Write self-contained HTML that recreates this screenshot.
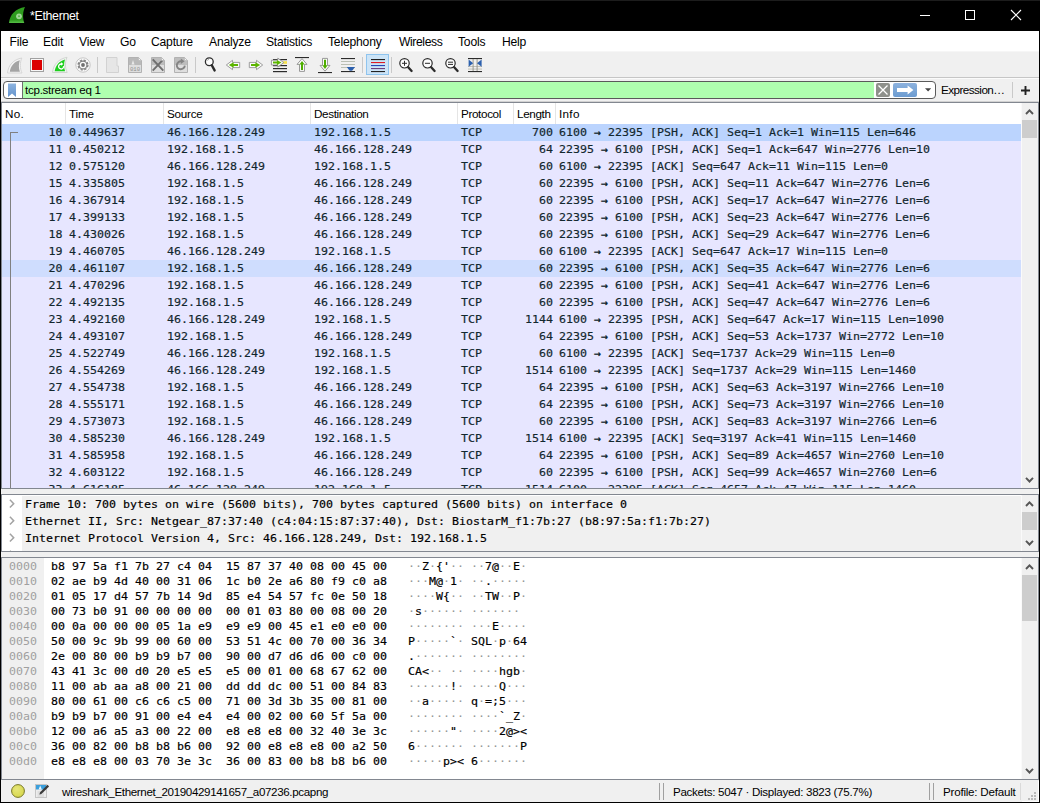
<!DOCTYPE html>
<html><head><meta charset="utf-8"><title>*Ethernet</title>
<style>
*{box-sizing:border-box;margin:0;padding:0}
html,body{width:1040px;height:803px;overflow:hidden;background:#000}
body{font-family:"Liberation Sans",sans-serif;font-size:12px;color:#000}
#win{position:relative;width:1040px;height:803px;background:#000;overflow:hidden}
#win i{position:absolute;display:block}
#win svg{position:absolute;display:block;overflow:visible}
#bg{position:absolute;left:1px;top:31px;width:1038px;height:771px;background:#f0f0f0}
#title{position:absolute;left:0;top:0;width:1040px;height:31px;background:#000;color:#fff}
#title span{position:absolute;left:30px;top:8px;font-size:12.4px;line-height:16px;white-space:nowrap;letter-spacing:-0.33px}
#menu{position:absolute;left:1px;top:31px;width:1038px;height:21px;background:#fff;border-bottom:1px solid #f6f6f6}
#menu span{position:absolute;top:3px;line-height:16px;font-size:12.15px;white-space:nowrap;letter-spacing:-0.2px}
#tb{position:absolute;left:1px;top:52px;width:1038px;height:27px;background:#f0f0f0;border-bottom:1px solid #fbfbfb}
#tb:after{content:"";position:absolute;left:0;right:0;top:25px;height:1px;background:#c6c6c6}
#fb{position:absolute;left:1px;top:79px;width:1038px;height:23px;background:#f0f0f0;border-bottom:1px solid #d2d2d2}
#fbox{position:absolute;left:2px;top:2px;width:933px;height:18px;border:1px solid #5a5a5a;border-radius:4px;background:#fff;overflow:hidden}
#fgreen{position:absolute;left:18px;top:0;width:852px;height:16px;background:#afffaf;border-left:1px solid #6e6e6e}
#ftext{position:absolute;left:21px;top:0;line-height:16px;font-size:11.6px;white-space:nowrap;letter-spacing:-0.28px}
.sans{font-family:"Liberation Sans",sans-serif}
#plist{position:absolute;left:1px;top:102px;width:1038px;height:387px;background:#fff;border:1px solid #828790;overflow:hidden}
#phead{position:absolute;left:0;top:0;width:1019px;height:21px;background:#fff}
.ht{position:absolute;top:3px;line-height:15px;font-size:11.7px;white-space:nowrap;letter-spacing:-0.36px}
#win i.hs{top:0;width:1px;height:21px;background:#e5e5e5}
.pr{position:absolute;left:0;width:1019px;height:17px;background:#e7e6ff;color:#12272e;font-family:"DejaVu Sans Mono","Liberation Mono",monospace;font-size:11.63px;line-height:17px;white-space:pre}
.pr.sel{background:#bbd4fe}
.pr.hov{background:#cfddfe}
.c{position:absolute;top:0;white-space:pre;transform:translateY(0.5px) scaleY(0.93)}
.c.r{text-align:right}
#tl1{left:8px;top:29px;width:8px;height:1px;background:#808080}
#tl2{left:8px;top:29px;width:1px;height:400px;background:#808080}
.sb{position:absolute;right:0;width:17px;background:#f0f0f0}
.sb .th{position:absolute;left:1px;width:15px;background:#cdcdcd}
#detail{position:absolute;left:1px;top:494px;width:1038px;height:58px;background:#fff;border:1px solid #828790;overflow:hidden}
.dr{position:absolute;left:0;width:1019px;background:linear-gradient(90deg,#fff 20px,#f0f0f0 20px);height:17px;font-family:"DejaVu Sans Mono","Liberation Mono",monospace;font-size:11.63px;line-height:17px;white-space:pre;color:#000}
.dr span{position:absolute;left:23px;top:0;transform:translateY(0.5px) scaleY(0.93)}
#hex{position:absolute;left:1px;top:557px;width:1038px;height:223px;background:#fff;border:1px solid #828790;overflow:hidden}
#hexoff{position:absolute;left:0;top:0;width:42px;height:221px;background:#f0f0f0}
.hr{position:absolute;left:0;width:1019px;height:15px;font-family:"DejaVu Sans Mono","Liberation Mono",monospace;font-size:11.63px;line-height:15px;white-space:pre;color:#000}
.hr span{position:absolute;top:0;white-space:pre;transform:translateY(0.5px) scaleY(0.93)}
.ho{left:7px;color:#a0a0a0}
.hb{left:49px}
.ha{left:406px}
.ha b{font-weight:normal;color:#969696;-webkit-text-stroke:0}
#status{position:absolute;left:1px;top:780px;width:1038px;height:22px;background:#f0f0f0}
#status span{position:absolute;top:4px;line-height:15px;font-size:11.6px;white-space:nowrap;letter-spacing:-0.3px}
svg.au path{fill:none;stroke:#565656;stroke-width:1.9}
svg.ex path{fill:none;stroke:#a3a3a3;stroke-width:1.5}
.sb:before{content:"";position:absolute;left:0;top:0;bottom:0;width:1px;background:#fafafa}
.c b{font-weight:bold}
.c,.dr span,.hb,.ha{-webkit-text-stroke:0.18px currentColor}

</style></head><body>
<div id="win">
<div id="bg"></div>
<div id="title"><svg style="left:0;top:0" width="32" height="31" viewBox="0 0 32 31"><defs><linearGradient id="gfin" x1="0" y1="0" x2="0" y2="1"><stop offset="0" stop-color="#2f9e1f"/><stop offset=".8" stop-color="#2c981c"/><stop offset="1" stop-color="#58c048"/></linearGradient></defs><path d="M9 23 C9.8 14.5 15.5 8.6 25 7 C22.8 11.5 22.4 17.5 24.3 23 Z" fill="url(#gfin)"/><circle cx="19" cy="16.3" r="2.9" fill="#b4e0aa" fill-opacity=".85"/><circle cx="19" cy="16.3" r="1" fill="#58b548"/></svg><span>*Ethernet</span>
<svg style="left:920px;top:15px" width="10" height="1"><rect width="10" height="1" fill="#fff"/></svg>
<svg style="left:965px;top:10px" width="10" height="10"><rect x="0.5" y="0.5" width="9" height="9" fill="none" stroke="#fff"/></svg>
<svg style="left:1011px;top:10px" width="10" height="10"><path d="M0 0L10 10M10 0L0 10" stroke="#fff" stroke-width="1.1"/></svg>
<i style="left:0;top:0;width:1040px;height:1px;background:#1c1c1c"></i></div>
<div id="menu"><span style="left:8.5px">File</span><span style="left:42px">Edit</span><span style="left:78px">View</span><span style="left:119px">Go</span><span style="left:150px">Capture</span><span style="left:208px">Analyze</span><span style="left:265px;letter-spacing:-0.25px">Statistics</span><span style="left:327px">Telephony</span><span style="left:398px;letter-spacing:-0.4px">Wireless</span><span style="left:457px">Tools</span><span style="left:501px">Help</span></div>
<div id="tb"><svg style="left:0;top:0" width="1038" height="27" viewBox="1 52 1038 27">
<!-- start capture (disabled fin) -->
<path d="M7.5 73 C8.3 65 13.5 59.5 21.8 58 C19.8 62.5 19.8 68.5 22 73 Z" fill="#f4f4f4" stroke="#d6d6d6" stroke-width="1"/>
<path d="M9.8 71.7 C10.6 66 14.3 61.6 19.8 60.2 C18.5 64 18.6 68.2 19.9 71.7 Z" fill="#a4a4a4"/>
<!-- stop -->
<rect x="30.5" y="58.5" width="13" height="13" fill="#f7f7f7" stroke="#a0a0a0"/>
<rect x="32" y="60" width="10" height="10" fill="#dc0000"/>
<!-- restart -->
<path d="M52.5 72.5 C53.3 64.5 58.5 59 67 57.3 C64.9 62 64.9 68 67.2 72.5 Z" fill="#f4f4f4" stroke="#d0d6d0" stroke-width="1"/>
<path d="M54.7 71.3 C55.5 65.5 59.3 61 65 59.5 C63.7 63.4 63.8 67.8 65.1 71.3 Z" fill="#1fcf1f"/>
<path d="M63.6 66.2 A2.5 2.5 0 1 1 61.2 64" fill="none" stroke="#fff" stroke-width="1.3"/>
<path d="M61 62.2 L63.4 64 L61 65.8 Z" fill="#fff"/>
<!-- options gear -->
<circle cx="83" cy="65" r="7.2" fill="#fbfbfb" stroke="#c6c6c6"/>
<circle cx="83" cy="65" r="4.9" fill="none" stroke="#858585" stroke-width="1.4" stroke-dasharray="2.3 1.55"/>
<circle cx="83" cy="65" r="3.9" fill="none" stroke="#808080" stroke-width="1.1"/>
<circle cx="83" cy="65" r="1.9" fill="#707070"/>
<rect x="97" y="57" width="1" height="16" fill="#c9c9c9"/>
<!-- open -->
<path d="M106.5 57.5 H117 V66 H118.5 V72.5 H106.5 Z" fill="#e6e6e6" stroke="#d2d2d2"/>
<!-- save 010 -->
<path d="M128.5 57.5 H138.5 L141.5 60.5 V72.5 H128.5 Z" fill="#dedede" stroke="#b2b2b2"/>
<path d="M129 58 H138.3 L141 60.7 V65 H129 Z" fill="#b9b9b9"/>
<path d="M138.5 57.5 V60.5 H141.5 Z" fill="#f4f4f4" stroke="#b2b2b2" stroke-width=".6"/>
<path d="M131.5 64.5 L133 60 L134.5 64.5Z" fill="#e8e8e8"/>
<text x="130" y="70.6" font-family="Liberation Mono,monospace" font-size="5.6" fill="#8e8e8e" textLength="10">010</text>
<!-- close -->
<path d="M151.5 57.5 H161.5 L164.5 60.5 V72.5 H151.5 Z" fill="#dedede" stroke="#b2b2b2"/>
<path d="M152 58 H161.3 L164 60.7 V65 H152 Z" fill="#bdbdbd"/>
<path d="M152.7 59.3 L163.3 70.7 M163.3 59.3 L152.7 70.7" stroke="#6e6e6e" stroke-width="1.9" fill="none"/>
<path d="M161.5 57.5 V60.5 H164.5 Z" fill="#f4f4f4" stroke="#b2b2b2" stroke-width=".6"/>
<!-- reload -->
<path d="M174.5 57.5 H184.5 L187.5 60.5 V72.5 H174.5 Z" fill="#dedede" stroke="#b2b2b2"/>
<path d="M175 58 H184.3 L187 60.7 V65 H175 Z" fill="#bdbdbd"/>
<path d="M184.8 65.6 A4 4 0 1 1 181.3 61.3" fill="none" stroke="#848484" stroke-width="1.9"/>
<path d="M180.8 58.6 L184.6 61.2 L180.8 64 Z" fill="#848484"/>
<path d="M184.5 57.5 V60.5 H187.5 Z" fill="#f4f4f4" stroke="#b2b2b2" stroke-width=".6"/>
<rect x="195" y="57" width="1" height="16" fill="#c9c9c9"/>
<!-- find -->
<circle cx="209.3" cy="61.8" r="3.9" fill="#fdfdfd" stroke="#2d2d2d" stroke-width="1.3"/>
<path d="M207 60.8 A2.4 2.4 0 0 1 209 59.4" fill="none" stroke="#9a9a9a" stroke-width=".8"/>
<path d="M211.8 65.2 L214.6 70.4" stroke="#2a2a2a" stroke-width="2.4" stroke-linecap="round"/>
<!-- back -->
<path d="M226.3 65 L232.5 60.3 V62.4 H239.7 V67.6 H232.5 V69.7 Z" fill="#fafafa" stroke="#939393" stroke-width=".9"/>
<path d="M228.8 65 L233.6 62.2 V63.9 H238 V66.1 H233.6 V67.8 Z" fill="#5cb500"/>
<!-- forward -->
<path d="M262.7 65 L256.5 60.3 V62.4 H249.3 V67.6 H256.5 V69.7 Z" fill="#fafafa" stroke="#939393" stroke-width=".9"/>
<path d="M260.2 65 L255.4 62.2 V63.9 H251 V66.1 H255.4 V67.8 Z" fill="#5cb500"/>
<!-- goto -->
<rect x="273" y="59" width="14" height="1.2" fill="#2b2b2b"/>
<rect x="273" y="65" width="14" height="1.2" fill="#2b2b2b"/>
<rect x="273" y="68" width="14" height="1.2" fill="#2b2b2b"/>
<rect x="273" y="71" width="14" height="1.2" fill="#2b2b2b"/>
<rect x="283" y="61.2" width="4" height="2.6" fill="#f5e04a"/>
<path d="M283.7 62.6 L277.8 58.1 V60.2 H271.4 V65 H277.8 V67.1 Z" fill="#fafafa" stroke="#8f8f8f" stroke-width=".9"/>
<path d="M281.4 62.6 L276.9 59.9 V61.6 H273 V63.6 H276.9 V65.3 Z" fill="#5cb500"/>
<!-- first -->
<rect x="295" y="57" width="14" height="1.1" fill="#2b2b2b"/>
<path d="M302 58.6 L297 64.4 H299.5 V71.4 H304.5 V64.4 H307 Z" fill="#fafafa" stroke="#8f8f8f" stroke-width=".9"/>
<path d="M302 60.9 L299.4 64.6 H301 V70 H303 V64.6 H304.6 Z" fill="#4fae00"/>
<!-- last -->
<rect x="318" y="72" width="14" height="1.1" fill="#2b2b2b"/>
<path d="M325 71.2 L320 65.4 H322.5 V58.4 H327.5 V65.4 H330 Z" fill="#fafafa" stroke="#8f8f8f" stroke-width=".9"/>
<path d="M325 68.9 L322.4 65.2 H324 V59.8 H326 V65.2 H327.6 Z" fill="#4fae00"/>
<!-- autoscroll -->
<rect x="341" y="58" width="14" height="1.1" fill="#2b2b2b"/>
<rect x="341" y="61.1" width="14" height=".9" fill="#b4b9ad"/>
<rect x="341" y="64.1" width="14" height=".9" fill="#b4b9ad"/>
<rect x="341" y="67.1" width="14" height=".9" fill="#b4b9ad"/>
<rect x="341" y="71" width="14" height="1.1" fill="#2b2b2b"/>
<path d="M346.8 67 H355 L352.6 70.2 Q350.9 71.4 349.2 70.2 Z" fill="#2c60ad"/>
<rect x="362" y="57" width="1" height="16" fill="#c9c9c9"/>
<!-- colorize (checked) -->
<rect x="366.5" y="54.5" width="22" height="20" fill="#cce4f7" stroke="#8fc4ee"/>
<rect x="371" y="59" width="14" height="1.1" fill="#222"/>
<rect x="371" y="62" width="14" height="1.1" fill="#e01b24"/>
<rect x="371" y="65" width="14" height="1.1" fill="#2546b8"/>
<rect x="371" y="68" width="14" height="1.1" fill="#6b3f7f"/>
<rect x="371" y="71" width="14" height="1.1" fill="#222"/>
<rect x="391" y="57" width="1" height="16" fill="#c9c9c9"/>
<!-- zoom in -->
<g fill="none" stroke="#2b2b2b">
<circle cx="404.5" cy="63.3" r="4.7" fill="#fdfdfd" stroke-width="1.2"/>
<path d="M408.2 67.2 L411.6 71" stroke-width="2.3" stroke-linecap="round"/>
<path d="M402 63.3 H407 M404.5 60.8 V65.8" stroke-width="1"/>
<circle cx="427.5" cy="63.3" r="4.7" fill="#fdfdfd" stroke-width="1.2"/>
<path d="M431.2 67.2 L434.6 71" stroke-width="2.3" stroke-linecap="round"/>
<path d="M425 63.3 H430" stroke-width="1"/>
<circle cx="450.5" cy="63.3" r="4.7" fill="#fdfdfd" stroke-width="1.2"/>
<path d="M454.2 67.2 L457.6 71" stroke-width="2.3" stroke-linecap="round"/>
<path d="M448 62.2 H453 M448 64.4 H453" stroke-width="1"/>
</g>
<!-- resize columns -->
<rect x="468" y="58" width="14" height="1.1" fill="#2b2b2b"/>
<rect x="468" y="71" width="14" height="1.1" fill="#2b2b2b"/>
<rect x="468" y="66.1" width="14" height=".9" fill="#b9b9b0"/>
<rect x="468" y="68.6" width="14" height=".9" fill="#b9b9b0"/>
<rect x="472.6" y="59" width="1" height="12" fill="#9a9a90"/>
<rect x="476.6" y="59" width="1" height="12" fill="#9a9a90"/>
<path d="M468.6 59.6 L473.2 63.2 L468.6 66.8 Z" fill="#2c60ad"/>
<path d="M481.6 59.6 L477 63.2 L481.6 66.8 Z" fill="#2c60ad"/>
</svg>
</div>
<div id="fb"><div id="fbox"><div id="fgreen"></div><span id="ftext">tcp.stream eq 1</span>
<svg style="left:-4px;top:-82px" width="940" height="20" viewBox="0 0 940 20">
<defs><linearGradient id="gbm" x1="0" y1="0" x2="0" y2="1"><stop offset="0" stop-color="#8db4e0"/><stop offset="1" stop-color="#6593cb"/></linearGradient>
<linearGradient id="gap" x1="0" y1="0" x2="0" y2="1"><stop offset="0" stop-color="#8db2de"/><stop offset="1" stop-color="#6c9cd1"/></linearGradient></defs>
</svg>
<svg style="left:0;top:0" width="931" height="16" viewBox="4 82 931 16">
<path d="M8 83.5 H16 V97 L12 93.6 L8 97 Z" fill="url(#gbm)"/>
<rect x="876" y="83" width="14" height="14" rx="2" fill="#8e908b"/>
<path d="M878.5 85.5 L887.5 94.5 M887.5 85.5 L878.5 94.5" stroke="#fff" stroke-width="1.3"/>
<rect x="893" y="83" width="24" height="14" rx="2" fill="url(#gap)"/>
<path d="M897 88 H907.6 V85.6 L913.4 90 L907.6 94.4 V92 H897 Z" fill="#fff"/>
<path d="M925 88.3 H931.2 L928.1 91.6 Z" fill="#444"/>
</svg></div>
<span class="ht" style="left:940px;top:3px;letter-spacing:-0.55px">Expression…</span>
<i style="left:1011px;top:3px;width:1px;height:16px;background:#c9c9c9"></i>
<svg style="left:1020px;top:7px" width="9" height="9" viewBox="0 0 9 9"><path d="M0 4.5H9M4.5 0V9" stroke="#222" stroke-width="1.9"/></svg>
</div>

<div id="plist">
<div id="phead">
<span class="ht" style="left:3px;letter-spacing:0.25px">No.</span>
<span class="ht" style="left:67px;letter-spacing:-0.2px">Time</span>
<span class="ht" style="left:165px;letter-spacing:-0.25px">Source</span>
<span class="ht" style="left:312px">Destination</span>
<span class="ht" style="left:459px">Protocol</span>
<span class="ht" style="left:515px">Length</span>
<span class="ht" style="left:557px;letter-spacing:0.3px">Info</span>
<i class="hs" style="left:63px"></i>
<i class="hs" style="left:161px"></i>
<i class="hs" style="left:308px"></i>
<i class="hs" style="left:455px"></i>
<i class="hs" style="left:511px"></i>
<i class="hs" style="left:553px"></i>
</div>
<div class="pr sel" style="top:21px"><span class="c r" style="left:0;width:60.6px">10</span><span class="c" style="left:67px">0.449637</span><span class="c" style="left:165px">46.166.128.249</span><span class="c" style="left:312px">192.168.1.5</span><span class="c" style="left:459px">TCP</span><span class="c r" style="left:511px;width:40px">700</span><span class="c" style="left:557px">6100 <b>→</b> 22395 [PSH, ACK] Seq=1 Ack=1 Win=115 Len=646</span></div>
<div class="pr" style="top:38px"><span class="c r" style="left:0;width:60.6px">11</span><span class="c" style="left:67px">0.450212</span><span class="c" style="left:165px">192.168.1.5</span><span class="c" style="left:312px">46.166.128.249</span><span class="c" style="left:459px">TCP</span><span class="c r" style="left:511px;width:40px">64</span><span class="c" style="left:557px">22395 <b>→</b> 6100 [PSH, ACK] Seq=1 Ack=647 Win=2776 Len=10</span></div>
<div class="pr" style="top:55px"><span class="c r" style="left:0;width:60.6px">12</span><span class="c" style="left:67px">0.575120</span><span class="c" style="left:165px">46.166.128.249</span><span class="c" style="left:312px">192.168.1.5</span><span class="c" style="left:459px">TCP</span><span class="c r" style="left:511px;width:40px">60</span><span class="c" style="left:557px">6100 <b>→</b> 22395 [ACK] Seq=647 Ack=11 Win=115 Len=0</span></div>
<div class="pr" style="top:72px"><span class="c r" style="left:0;width:60.6px">15</span><span class="c" style="left:67px">4.335805</span><span class="c" style="left:165px">192.168.1.5</span><span class="c" style="left:312px">46.166.128.249</span><span class="c" style="left:459px">TCP</span><span class="c r" style="left:511px;width:40px">60</span><span class="c" style="left:557px">22395 <b>→</b> 6100 [PSH, ACK] Seq=11 Ack=647 Win=2776 Len=6</span></div>
<div class="pr" style="top:89px"><span class="c r" style="left:0;width:60.6px">16</span><span class="c" style="left:67px">4.367914</span><span class="c" style="left:165px">192.168.1.5</span><span class="c" style="left:312px">46.166.128.249</span><span class="c" style="left:459px">TCP</span><span class="c r" style="left:511px;width:40px">60</span><span class="c" style="left:557px">22395 <b>→</b> 6100 [PSH, ACK] Seq=17 Ack=647 Win=2776 Len=6</span></div>
<div class="pr" style="top:106px"><span class="c r" style="left:0;width:60.6px">17</span><span class="c" style="left:67px">4.399133</span><span class="c" style="left:165px">192.168.1.5</span><span class="c" style="left:312px">46.166.128.249</span><span class="c" style="left:459px">TCP</span><span class="c r" style="left:511px;width:40px">60</span><span class="c" style="left:557px">22395 <b>→</b> 6100 [PSH, ACK] Seq=23 Ack=647 Win=2776 Len=6</span></div>
<div class="pr" style="top:123px"><span class="c r" style="left:0;width:60.6px">18</span><span class="c" style="left:67px">4.430026</span><span class="c" style="left:165px">192.168.1.5</span><span class="c" style="left:312px">46.166.128.249</span><span class="c" style="left:459px">TCP</span><span class="c r" style="left:511px;width:40px">60</span><span class="c" style="left:557px">22395 <b>→</b> 6100 [PSH, ACK] Seq=29 Ack=647 Win=2776 Len=6</span></div>
<div class="pr" style="top:140px"><span class="c r" style="left:0;width:60.6px">19</span><span class="c" style="left:67px">4.460705</span><span class="c" style="left:165px">46.166.128.249</span><span class="c" style="left:312px">192.168.1.5</span><span class="c" style="left:459px">TCP</span><span class="c r" style="left:511px;width:40px">60</span><span class="c" style="left:557px">6100 <b>→</b> 22395 [ACK] Seq=647 Ack=17 Win=115 Len=0</span></div>
<div class="pr hov" style="top:157px"><span class="c r" style="left:0;width:60.6px">20</span><span class="c" style="left:67px">4.461107</span><span class="c" style="left:165px">192.168.1.5</span><span class="c" style="left:312px">46.166.128.249</span><span class="c" style="left:459px">TCP</span><span class="c r" style="left:511px;width:40px">60</span><span class="c" style="left:557px">22395 <b>→</b> 6100 [PSH, ACK] Seq=35 Ack=647 Win=2776 Len=6</span></div>
<div class="pr" style="top:174px"><span class="c r" style="left:0;width:60.6px">21</span><span class="c" style="left:67px">4.470296</span><span class="c" style="left:165px">192.168.1.5</span><span class="c" style="left:312px">46.166.128.249</span><span class="c" style="left:459px">TCP</span><span class="c r" style="left:511px;width:40px">60</span><span class="c" style="left:557px">22395 <b>→</b> 6100 [PSH, ACK] Seq=41 Ack=647 Win=2776 Len=6</span></div>
<div class="pr" style="top:191px"><span class="c r" style="left:0;width:60.6px">22</span><span class="c" style="left:67px">4.492135</span><span class="c" style="left:165px">192.168.1.5</span><span class="c" style="left:312px">46.166.128.249</span><span class="c" style="left:459px">TCP</span><span class="c r" style="left:511px;width:40px">60</span><span class="c" style="left:557px">22395 <b>→</b> 6100 [PSH, ACK] Seq=47 Ack=647 Win=2776 Len=6</span></div>
<div class="pr" style="top:208px"><span class="c r" style="left:0;width:60.6px">23</span><span class="c" style="left:67px">4.492160</span><span class="c" style="left:165px">46.166.128.249</span><span class="c" style="left:312px">192.168.1.5</span><span class="c" style="left:459px">TCP</span><span class="c r" style="left:511px;width:40px">1144</span><span class="c" style="left:557px">6100 <b>→</b> 22395 [PSH, ACK] Seq=647 Ack=17 Win=115 Len=1090</span></div>
<div class="pr" style="top:225px"><span class="c r" style="left:0;width:60.6px">24</span><span class="c" style="left:67px">4.493107</span><span class="c" style="left:165px">192.168.1.5</span><span class="c" style="left:312px">46.166.128.249</span><span class="c" style="left:459px">TCP</span><span class="c r" style="left:511px;width:40px">64</span><span class="c" style="left:557px">22395 <b>→</b> 6100 [PSH, ACK] Seq=53 Ack=1737 Win=2772 Len=10</span></div>
<div class="pr" style="top:242px"><span class="c r" style="left:0;width:60.6px">25</span><span class="c" style="left:67px">4.522749</span><span class="c" style="left:165px">46.166.128.249</span><span class="c" style="left:312px">192.168.1.5</span><span class="c" style="left:459px">TCP</span><span class="c r" style="left:511px;width:40px">60</span><span class="c" style="left:557px">6100 <b>→</b> 22395 [ACK] Seq=1737 Ack=29 Win=115 Len=0</span></div>
<div class="pr" style="top:259px"><span class="c r" style="left:0;width:60.6px">26</span><span class="c" style="left:67px">4.554269</span><span class="c" style="left:165px">46.166.128.249</span><span class="c" style="left:312px">192.168.1.5</span><span class="c" style="left:459px">TCP</span><span class="c r" style="left:511px;width:40px">1514</span><span class="c" style="left:557px">6100 <b>→</b> 22395 [ACK] Seq=1737 Ack=29 Win=115 Len=1460</span></div>
<div class="pr" style="top:276px"><span class="c r" style="left:0;width:60.6px">27</span><span class="c" style="left:67px">4.554738</span><span class="c" style="left:165px">192.168.1.5</span><span class="c" style="left:312px">46.166.128.249</span><span class="c" style="left:459px">TCP</span><span class="c r" style="left:511px;width:40px">64</span><span class="c" style="left:557px">22395 <b>→</b> 6100 [PSH, ACK] Seq=63 Ack=3197 Win=2766 Len=10</span></div>
<div class="pr" style="top:293px"><span class="c r" style="left:0;width:60.6px">28</span><span class="c" style="left:67px">4.555171</span><span class="c" style="left:165px">192.168.1.5</span><span class="c" style="left:312px">46.166.128.249</span><span class="c" style="left:459px">TCP</span><span class="c r" style="left:511px;width:40px">64</span><span class="c" style="left:557px">22395 <b>→</b> 6100 [PSH, ACK] Seq=73 Ack=3197 Win=2766 Len=10</span></div>
<div class="pr" style="top:310px"><span class="c r" style="left:0;width:60.6px">29</span><span class="c" style="left:67px">4.573073</span><span class="c" style="left:165px">192.168.1.5</span><span class="c" style="left:312px">46.166.128.249</span><span class="c" style="left:459px">TCP</span><span class="c r" style="left:511px;width:40px">60</span><span class="c" style="left:557px">22395 <b>→</b> 6100 [PSH, ACK] Seq=83 Ack=3197 Win=2766 Len=6</span></div>
<div class="pr" style="top:327px"><span class="c r" style="left:0;width:60.6px">30</span><span class="c" style="left:67px">4.585230</span><span class="c" style="left:165px">46.166.128.249</span><span class="c" style="left:312px">192.168.1.5</span><span class="c" style="left:459px">TCP</span><span class="c r" style="left:511px;width:40px">1514</span><span class="c" style="left:557px">6100 <b>→</b> 22395 [ACK] Seq=3197 Ack=41 Win=115 Len=1460</span></div>
<div class="pr" style="top:344px"><span class="c r" style="left:0;width:60.6px">31</span><span class="c" style="left:67px">4.585958</span><span class="c" style="left:165px">192.168.1.5</span><span class="c" style="left:312px">46.166.128.249</span><span class="c" style="left:459px">TCP</span><span class="c r" style="left:511px;width:40px">64</span><span class="c" style="left:557px">22395 <b>→</b> 6100 [PSH, ACK] Seq=89 Ack=4657 Win=2760 Len=10</span></div>
<div class="pr" style="top:361px"><span class="c r" style="left:0;width:60.6px">32</span><span class="c" style="left:67px">4.603122</span><span class="c" style="left:165px">192.168.1.5</span><span class="c" style="left:312px">46.166.128.249</span><span class="c" style="left:459px">TCP</span><span class="c r" style="left:511px;width:40px">60</span><span class="c" style="left:557px">22395 <b>→</b> 6100 [PSH, ACK] Seq=99 Ack=4657 Win=2760 Len=6</span></div>
<div class="pr" style="top:378px"><span class="c r" style="left:0;width:60.6px">33</span><span class="c" style="left:67px">4.616185</span><span class="c" style="left:165px">46.166.128.249</span><span class="c" style="left:312px">192.168.1.5</span><span class="c" style="left:459px">TCP</span><span class="c r" style="left:511px;width:40px">1514</span><span class="c" style="left:557px">6100 <b>→</b> 22395 [ACK] Seq=4657 Ack=47 Win=115 Len=1460</span></div>
<i id="tl1"></i><i id="tl2"></i>
<div class="sb" style="top:0;height:385px"><div class="th" style="top:17px;height:18px"></div><svg class="au" style="left:0;top:0" width="17" height="17"><path d="M5 11 L8.5 7.3 L12 11" /></svg><svg class="au" style="left:0;top:368px" width="17" height="17"><path d="M5 6.8 L8.5 10.5 L12 6.8" /></svg></div>

</div>
<div id="detail">
<div class="dr" style="top:1px"><svg class="ex" style="left:7px;top:3px" width="6" height="10"><path d="M0.9 0.8 L4.7 4.7 L0.9 8.6"/></svg><span>Frame 10: 700 bytes on wire (5600 bits), 700 bytes captured (5600 bits) on interface 0</span></div>
<div class="dr" style="top:18px"><svg class="ex" style="left:7px;top:3px" width="6" height="10"><path d="M0.9 0.8 L4.7 4.7 L0.9 8.6"/></svg><span>Ethernet II, Src: Netgear_87:37:40 (c4:04:15:87:37:40), Dst: BiostarM_f1:7b:27 (b8:97:5a:f1:7b:27)</span></div>
<div class="dr" style="top:35px"><svg class="ex" style="left:7px;top:3px" width="6" height="10"><path d="M0.9 0.8 L4.7 4.7 L0.9 8.6"/></svg><span>Internet Protocol Version 4, Src: 46.166.128.249, Dst: 192.168.1.5</span></div>
<div class="dr" style="top:52px"><svg class="ex" style="left:7px;top:3px" width="6" height="10"><path d="M0.9 0.8 L4.7 4.7 L0.9 8.6"/></svg><span>Transmission Control Protocol, Src Port: 6100, Dst Port: 22395, Seq: 1, Ack: 1, Len: 646</span></div>
<div class="sb" style="top:0;height:56px"><div class="th" style="top:17px;height:18px"></div><svg class="au" style="left:0;top:0" width="17" height="17"><path d="M5 11 L8.5 7.3 L12 11" /></svg><svg class="au" style="left:0;top:39px" width="17" height="17"><path d="M5 6.8 L8.5 10.5 L12 6.8" /></svg></div>
</div>

<div id="hex"><div id="hexoff"></div>
<div class="hr" style="top:1px"><span class="ho">0000</span><span class="hb">b8 97 5a f1 7b 27 c4 04  15 87 37 40 08 00 45 00</span><span class="ha"><b>·</b><b>·</b>Z<b>·</b>{'<b>·</b><b>·</b> <b>·</b><b>·</b>7@<b>·</b><b>·</b>E<b>·</b></span></div>
<div class="hr" style="top:16px"><span class="ho">0010</span><span class="hb">02 ae b9 4d 40 00 31 06  1c b0 2e a6 80 f9 c0 a8</span><span class="ha"><b>·</b><b>·</b><b>·</b>M@<b>·</b>1<b>·</b> <b>·</b><b>·</b>.<b>·</b><b>·</b><b>·</b><b>·</b><b>·</b></span></div>
<div class="hr" style="top:31px"><span class="ho">0020</span><span class="hb">01 05 17 d4 57 7b 14 9d  85 e4 54 57 fc 0e 50 18</span><span class="ha"><b>·</b><b>·</b><b>·</b><b>·</b>W{<b>·</b><b>·</b> <b>·</b><b>·</b>TW<b>·</b><b>·</b>P<b>·</b></span></div>
<div class="hr" style="top:46px"><span class="ho">0030</span><span class="hb">00 73 b0 91 00 00 00 00  00 01 03 80 00 08 00 20</span><span class="ha"><b>·</b>s<b>·</b><b>·</b><b>·</b><b>·</b><b>·</b><b>·</b> <b>·</b><b>·</b><b>·</b><b>·</b><b>·</b><b>·</b><b>·</b> </span></div>
<div class="hr" style="top:61px"><span class="ho">0040</span><span class="hb">00 0a 00 00 00 05 1a e9  e9 e9 00 45 e1 e0 e0 00</span><span class="ha"><b>·</b><b>·</b><b>·</b><b>·</b><b>·</b><b>·</b><b>·</b><b>·</b> <b>·</b><b>·</b><b>·</b>E<b>·</b><b>·</b><b>·</b><b>·</b></span></div>
<div class="hr" style="top:76px"><span class="ho">0050</span><span class="hb">50 00 9c 9b 99 00 60 00  53 51 4c 00 70 00 36 34</span><span class="ha">P<b>·</b><b>·</b><b>·</b><b>·</b><b>·</b>`<b>·</b> SQL<b>·</b>p<b>·</b>64</span></div>
<div class="hr" style="top:91px"><span class="ho">0060</span><span class="hb">2e 00 80 00 b9 b9 b7 00  90 00 d7 d6 d6 00 c0 00</span><span class="ha">.<b>·</b><b>·</b><b>·</b><b>·</b><b>·</b><b>·</b><b>·</b> <b>·</b><b>·</b><b>·</b><b>·</b><b>·</b><b>·</b><b>·</b><b>·</b></span></div>
<div class="hr" style="top:106px"><span class="ho">0070</span><span class="hb">43 41 3c 00 d0 20 e5 e5  e5 00 01 00 68 67 62 00</span><span class="ha">CA&lt;<b>·</b><b>·</b> <b>·</b><b>·</b> <b>·</b><b>·</b><b>·</b><b>·</b>hgb<b>·</b></span></div>
<div class="hr" style="top:121px"><span class="ho">0080</span><span class="hb">11 00 ab aa a8 00 21 00  dd dd dc 00 51 00 84 83</span><span class="ha"><b>·</b><b>·</b><b>·</b><b>·</b><b>·</b><b>·</b>!<b>·</b> <b>·</b><b>·</b><b>·</b><b>·</b>Q<b>·</b><b>·</b><b>·</b></span></div>
<div class="hr" style="top:136px"><span class="ho">0090</span><span class="hb">80 00 61 00 c6 c6 c5 00  71 00 3d 3b 35 00 81 00</span><span class="ha"><b>·</b><b>·</b>a<b>·</b><b>·</b><b>·</b><b>·</b><b>·</b> q<b>·</b>=;5<b>·</b><b>·</b><b>·</b></span></div>
<div class="hr" style="top:151px"><span class="ho">00a0</span><span class="hb">b9 b9 b7 00 91 00 e4 e4  e4 00 02 00 60 5f 5a 00</span><span class="ha"><b>·</b><b>·</b><b>·</b><b>·</b><b>·</b><b>·</b><b>·</b><b>·</b> <b>·</b><b>·</b><b>·</b><b>·</b>`_Z<b>·</b></span></div>
<div class="hr" style="top:166px"><span class="ho">00b0</span><span class="hb">12 00 a6 a5 a3 00 22 00  e8 e8 e8 00 32 40 3e 3c</span><span class="ha"><b>·</b><b>·</b><b>·</b><b>·</b><b>·</b><b>·</b>"<b>·</b> <b>·</b><b>·</b><b>·</b><b>·</b>2@&gt;&lt;</span></div>
<div class="hr" style="top:181px"><span class="ho">00c0</span><span class="hb">36 00 82 00 b8 b8 b6 00  92 00 e8 e8 e8 00 a2 50</span><span class="ha">6<b>·</b><b>·</b><b>·</b><b>·</b><b>·</b><b>·</b><b>·</b> <b>·</b><b>·</b><b>·</b><b>·</b><b>·</b><b>·</b><b>·</b>P</span></div>
<div class="hr" style="top:196px"><span class="ho">00d0</span><span class="hb">e8 e8 e8 00 03 70 3e 3c  36 00 83 00 b8 b8 b6 00</span><span class="ha"><b>·</b><b>·</b><b>·</b><b>·</b><b>·</b>p&gt;&lt; 6<b>·</b><b>·</b><b>·</b><b>·</b><b>·</b><b>·</b><b>·</b></span></div>
<div class="sb" style="top:0;height:221px"><div class="th" style="top:17px;height:46px"></div><svg class="au" style="left:0;top:0" width="17" height="17"><path d="M5 11 L8.5 7.3 L12 11" /></svg><svg class="au" style="left:0;top:204px" width="17" height="17"><path d="M5 6.8 L8.5 10.5 L12 6.8" /></svg></div>

</div>
<div id="status">
<svg style="left:10px;top:4px" width="14" height="14" viewBox="0 0 14 14"><defs><radialGradient id="gy" cx="0.4" cy="0.35" r="0.7"><stop offset="0" stop-color="#e6e67a"/><stop offset="1" stop-color="#d6d64a"/></radialGradient></defs><circle cx="7" cy="7" r="6.4" fill="url(#gy)" stroke="#77772a" stroke-width="1"/></svg>
<svg style="left:32.5px;top:3px" width="16" height="16" viewBox="33 783 16 16"><rect x="34.5" y="784.5" width="11" height="13" fill="#ececec" stroke="#c4c4c4"/><rect x="35" y="785" width="10" height="4.5" fill="#3a9fdc"/><path d="M37.6 789.5 L39.2 785.6 L40.8 789.5Z" fill="#eef6fc"/><path d="M36.5 792H43M36.5 794H43M36.5 796H43" stroke="#c9c9c9" stroke-width=".8"/><path d="M47.3 785.6 L39.6 793.2" stroke="#3a3a3a" stroke-width="2.2"/><path d="M38.4 794.5 L39 792.6 L40.3 793.9Z" fill="#222"/></svg>
<span style="left:61px;letter-spacing:-0.36px">wireshark_Ethernet_20190429141657_a07236.pcapng</span>
<i style="left:658px;top:3px;width:1px;height:17px;background:#a0a0a0"></i><i style="left:662px;top:3px;width:1px;height:17px;background:#a0a0a0"></i>
<span style="left:672px">Packets: 5047 · Displayed: 3823 (75.7%)</span>
<i style="left:928px;top:3px;width:1px;height:17px;background:#a0a0a0"></i><i style="left:932px;top:3px;width:1px;height:17px;background:#a0a0a0"></i>
<span style="left:942px;letter-spacing:-0.22px">Profile: Default</span>
<i style="left:1019px;top:3px;width:1px;height:17px;background:#dadada"></i>
<svg style="left:1027px;top:12px" width="10" height="10" viewBox="0 0 10 10"><g fill="#b9b9b9"><rect x="6" y="0" width="2" height="2"/><rect x="3" y="3" width="2" height="2"/><rect x="6" y="3" width="2" height="2"/><rect x="0" y="6" width="2" height="2"/><rect x="3" y="6" width="2" height="2"/><rect x="6" y="6" width="2" height="2"/></g></svg>
<i style="left:1021px;top:21px;width:17px;height:1px;background:#fff"></i><i style="left:1037px;top:1px;width:1px;height:21px;background:#fff"></i>
</div>

</div></body></html>
